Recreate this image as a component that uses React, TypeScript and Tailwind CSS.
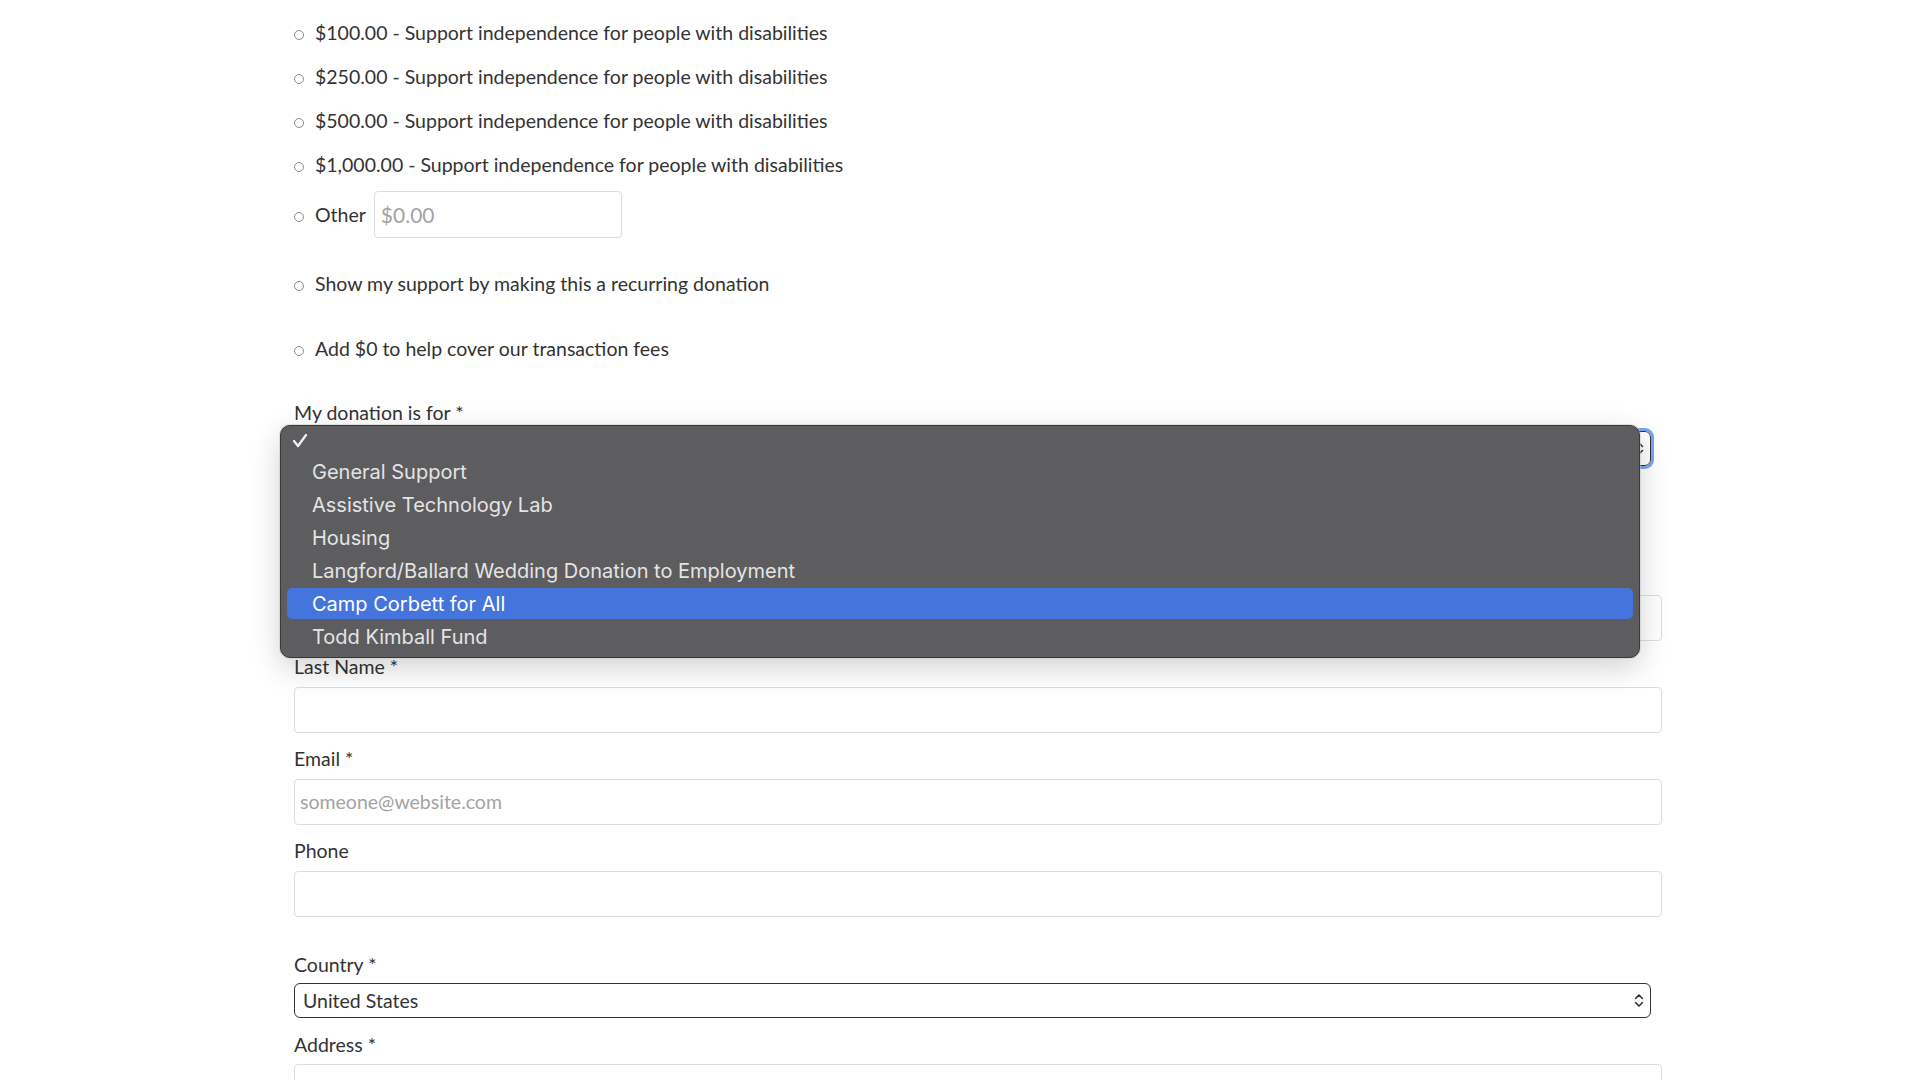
import { useState } from 'react';

const amounts = ['$50.00', '$100.00', '$250.00', '$500.00', '$1,000.00'];

const funds = [
  'General Support',
  'Assistive Technology Lab',
  'Housing',
  'Langford/Ballard Wedding Donation to Employment',
  'Camp Corbett for All',
  'Todd Kimball Fund',
];

const Radio = () => (
  <span className="inline-block w-[10px] h-[10px] translate-y-[2px] rounded-full border border-[#8a8a8a] bg-white shrink-0" />
);

const Chevrons = () => (
  <svg width="10" height="15" viewBox="0 0 10 15" fill="none" stroke="#333" strokeWidth="1.6" strokeLinecap="round" strokeLinejoin="round">
    <path d="M1.5 5.5 5 2l3.5 3.5" />
    <path d="M1.5 9.5 5 13l3.5-3.5" />
  </svg>
);

const Label = ({ children }: { children: React.ReactNode }) => (
  <div className="h-[24px] leading-[24px]">{children}</div>
);

const TextInput = ({ placeholder }: { placeholder?: string }) => (
  <div className="h-[46px] w-full rounded-[4px] border border-[#dcdcdc] bg-white flex items-center px-[5px] text-[#a3a3a3]">
    {placeholder}
  </div>
);

export default function App() {
  const [selected] = useState(4);

  return (
    <div className="h-screen w-full overflow-hidden bg-white text-[19.5px] text-[#333]" style={{ fontFamily: 'Lato, "Open Sans", sans-serif' }}>
      <div className="ml-[294px] w-[1368px] -mt-[33px]">
        {amounts.map((a) => (
          <div key={a} className="h-[44px] flex items-center gap-[11px]">
            <Radio />
            <span>{a} - Support independence for people with disabilities</span>
          </div>
        ))}

        <div className="mt-[4px] h-[47px] flex items-center gap-[11px]">
          <Radio />
          <span>Other</span>
          <div className="-ml-[3px] w-[248px] h-[47px] rounded-[4px] border border-[#dcdcdc] flex items-center px-[6px] text-[#a3a3a3] text-[21px]">
            $0.00
          </div>
        </div>

        <div className="mt-[24px] h-[44px] flex items-center gap-[11px]">
          <Radio />
          <span>Show my support by making this a recurring donation</span>
        </div>

        <div className="mt-[21px] h-[44px] flex items-center gap-[11px]">
          <Radio />
          <span>Add $0 to help cover our transaction fees</span>
        </div>

        <div className="relative mt-[30px]">
          <Label>My donation is for *</Label>
          <div className="mt-[6px] w-[1357px] h-[35px] rounded-[6px] border border-[#333] outline-[3px] outline outline-[#7ba5f2] flex items-center justify-between pl-[8px] pr-[6px]">
            <span />
            <Chevrons />
          </div>

          {/* fields hidden behind the open menu */}
          <div className="h-[129px]" />
          <TextInput />

          <div
            className="absolute left-[-14px] top-[24px] w-[1360px] h-[233px] rounded-[10px] bg-[#5d5d5f] border border-[#3a3a3a] shadow-[0_0_0_1px_rgba(200,200,200,0.5),0_10px_30px_rgba(0,0,0,0.18)] px-[6px] pb-[4px]"
            style={{ fontFamily: 'Inter, "Liberation Sans", sans-serif' }}
          >
            <div className="h-[29px] flex items-center pl-[5px]">
              <svg width="16" height="15" viewBox="0 0 16 15" fill="none" stroke="#f0f0f0" strokeWidth="2.3" strokeLinecap="round" strokeLinejoin="round">
                <path d="M2 8 6 13 14 2" />
              </svg>
            </div>
            {funds.map((f, i) => (
              <div key={f} className="h-[33px] py-[1px]">
                <div
                  className={
                    i === selected
                      ? 'h-full rounded-[5px] bg-[#4475dc] text-white flex items-center pl-[25px] text-[20px]'
                      : 'h-full flex items-center pl-[25px] text-[20px] text-[#e4e4e4]'
                  }
                >
                  {f}
                </div>
              </div>
            ))}
          </div>
        </div>

        <div className="mt-[14px]">
          <Label>Last Name *</Label>
        </div>
        <div className="mt-[8px]">
          <TextInput />
        </div>

        <div className="mt-[14px]">
          <Label>Email *</Label>
        </div>
        <div className="mt-[8px]">
          <TextInput placeholder="someone@website.com" />
        </div>

        <div className="mt-[14px]">
          <Label>Phone</Label>
        </div>
        <div className="mt-[8px]">
          <TextInput />
        </div>

        <div className="mt-[36px]">
          <Label>Country *</Label>
        </div>
        <div className="mt-[6px] w-[1357px] h-[35px] rounded-[6px] border border-[#333] flex items-center justify-between pl-[8px] pr-[6px]">
          <span>United States</span>
          <Chevrons />
        </div>

        <div className="mt-[15px]">
          <Label>Address *</Label>
        </div>
        <div className="mt-[7px]">
          <TextInput />
        </div>
      </div>
    </div>
  );
}
